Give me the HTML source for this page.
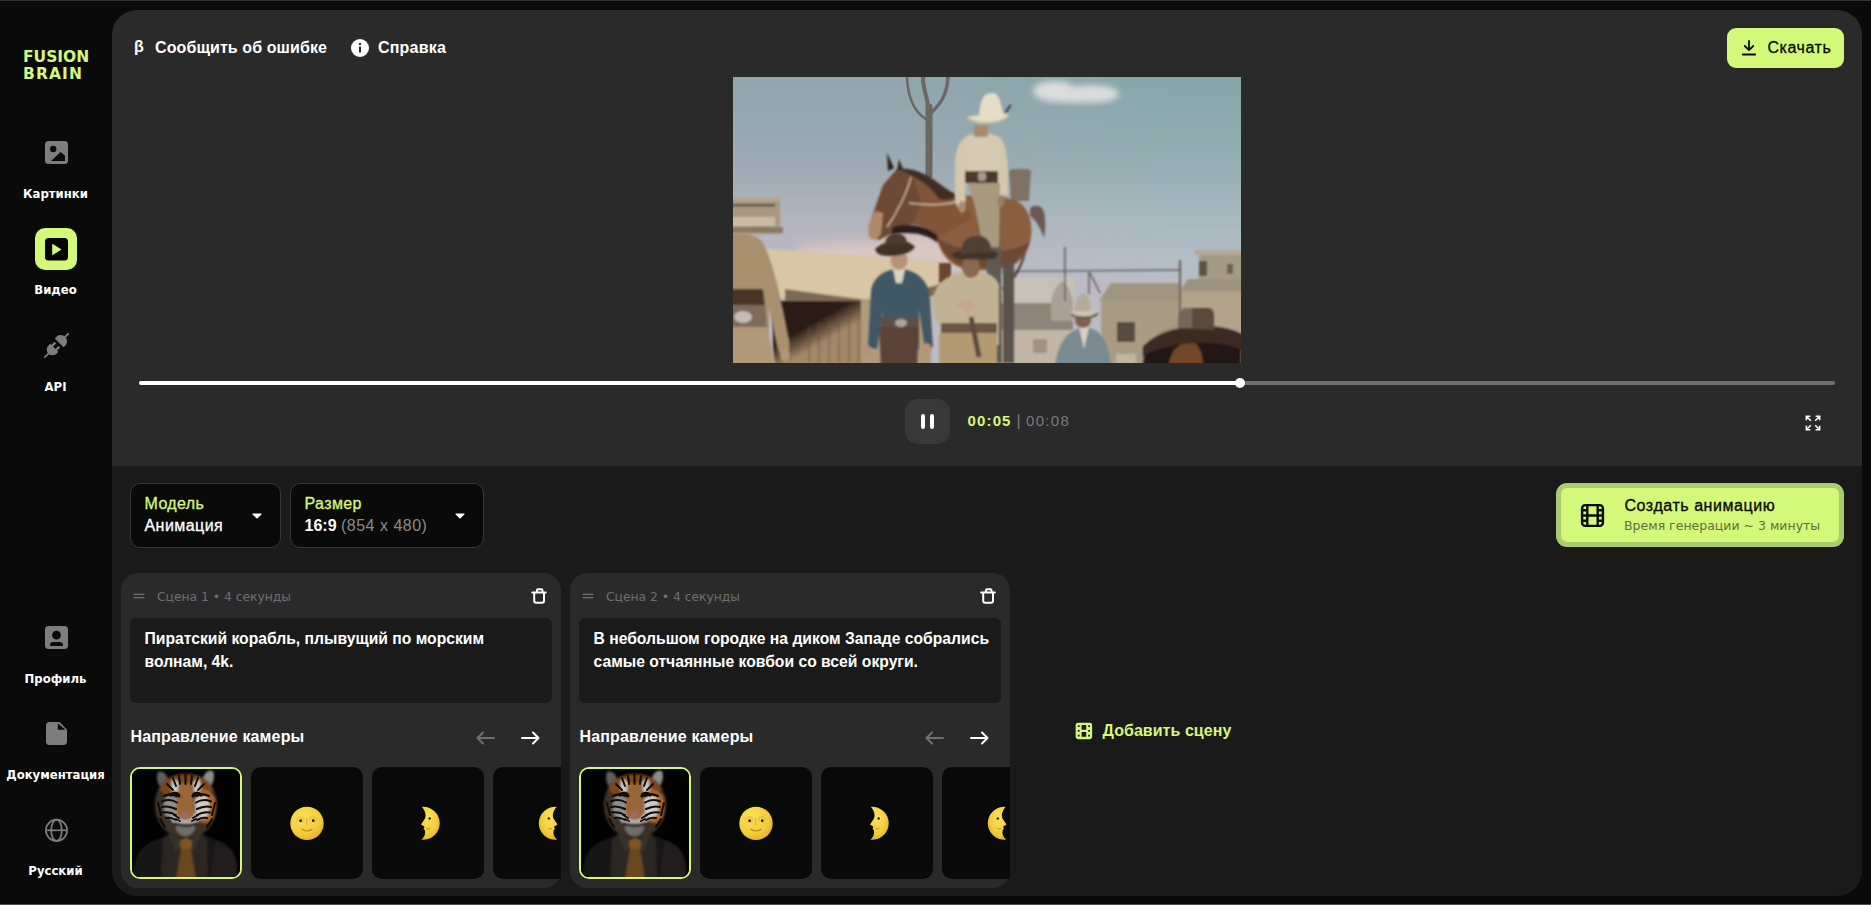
<!DOCTYPE html>
<html lang="ru">
<head>
<meta charset="utf-8">
<title>Fusion Brain</title>
<style>
*{box-sizing:border-box;margin:0;padding:0}
html,body{width:1871px;height:905px;overflow:hidden;background:#0a0a0a}
body{position:relative;font-family:"Liberation Sans",sans-serif;color:#fff}
.abs{position:absolute}
.t{position:absolute;white-space:nowrap;line-height:20px}
.b{font-weight:700}
.dj{font-family:"DejaVu Sans","Liberation Sans",sans-serif}
.lime{color:#d4f87a}
.topstrip{left:0;top:0;width:1871px;height:1px;background:#343434}
.botstrip{left:0;top:904px;width:1871px;height:1px;background:#4c4e4d}
.panel{left:112px;top:10px;width:1750px;height:886px;border-radius:25px;background:#1a1a1a;overflow:hidden}
.panel .upper{left:0;top:0;width:1750px;height:456px;background:#2a2a2a}
.navlbl{position:absolute;left:-.5px;width:112px;text-align:center;font-family:"DejaVu Sans",sans-serif;font-weight:700;font-size:11.700px;line-height:16px;color:#fff}
.navico{position:absolute;left:44px;width:24px;height:24px}
.card{position:absolute;top:573px;width:440px;height:315px;border-radius:17px;background:#2a2a2a}
.ta{position:absolute;left:9px;top:45px;width:422px;height:85px;border-radius:6px;background:#1a1a1a}
.thumbs{position:absolute;left:0;top:190px;width:440px;height:120px;overflow:hidden}
.thumb{position:absolute;top:4px;width:112px;height:112px;border-radius:10px;background:#090909;overflow:hidden}
.thumb.sel{border:2px solid #d4f87a}
.sel-box{position:absolute;top:483px;height:65px;border-radius:10px;background:#0a0a0a;border:1px solid #383838}
</style>
</head>
<body>
<div class="abs topstrip"></div>
<div class="abs botstrip"></div>

<svg width="0" height="0" style="position:absolute"><defs><filter id="tb"><feGaussianBlur stdDeviation=".8"/></filter><filter id="tb2"><feGaussianBlur stdDeviation=".45"/></filter><radialGradient id="mg" cx=".38" cy=".32" r=".8"><stop offset="0" stop-color="#fbe15a"/><stop offset=".6" stop-color="#f3cd3c"/><stop offset="1" stop-color="#dca724"/></radialGradient><filter id="mb"><feGaussianBlur stdDeviation=".35"/></filter></defs></svg>
<!-- SIDEBAR -->
<div id="sidebar">
  <div class="t lime" id="logo1" style="left:23px;top:48px;font-family:'DejaVu Sans',sans-serif;font-weight:700;font-size:15.500px;line-height:18px">FUSION</div>
  <div class="t lime" id="logo2" style="left:23px;top:64.500px;letter-spacing:1.1px;font-family:'DejaVu Sans',sans-serif;font-weight:700;font-size:15.500px;line-height:18px">BRAIN</div>

  <svg class="abs" style="left:45px;top:141px;width:23px;height:23px" viewBox="0 0 23 23"><path fill="#7d7d7d" fill-rule="evenodd" d="M3.500 0h16A3.500 3.500 0 0 1 23 3.500v16a3.500 3.500 0 0 1-3.500 3.500h-16A3.500 3.500 0 0 1 0 19.500v-16A3.500 3.500 0 0 1 3.500 0zM8.200 4.800a3.200 3.200 0 1 0 0 6.400 3.200 3.200 0 0 0 0-6.400zM6 20h14v-5.200l-4.400-3.900z"/></svg>
  <div class="navlbl" id="nl1" style="top:185.500px">Картинки</div>

  <div class="abs" style="left:35px;top:228px;width:42px;height:42px;border-radius:10px;background:#d4f87a"></div>
  <svg class="abs" style="left:45px;top:238px;width:23px;height:23px" viewBox="0 0 23 23"><path fill="#050505" fill-rule="evenodd" d="M3.500 0h16A3.500 3.500 0 0 1 23 3.500v15.500a3.500 3.500 0 0 1-3.500 3.500h-16A3.500 3.500 0 0 1 0 19v-15.500A3.500 3.500 0 0 1 3.500 0zM7.200 6.300v10.400a.4.400 0 0 0 .6.350l8.300-5.200a.4.400 0 0 0 0-.7L7.800 5.950a.4.400 0 0 0-.6.350z"/></svg>
  <div class="navlbl" id="nl2" style="top:282px">Видео</div>

  <svg class="abs" style="left:44px;top:333px;width:25px;height:25px;overflow:visible" viewBox="-12.500 -12.500 25 25"><g fill="#7d7d7d" transform="rotate(45)"><rect x="-.9" y="-17.300" width="1.800" height="6"/><path d="M-6.200 -3.700v-3a6.200 5.500 0 0 1 12.400 0v3z"/><rect x="-4" y="-1.200" width="2.300" height="5"/><rect x="1.700" y="-1.200" width="2.300" height="5"/><path d="M-5.800 3.200h11.600v2.500a5.800 5.800 0 0 1-11.600 0z"/><rect x="-.9" y="11" width="1.800" height="6.300"/></g></svg>
  <div class="navlbl" id="nl3" style="top:378.500px">API</div>

  <svg class="abs" style="left:45px;top:626px;width:23px;height:23px" viewBox="0 0 23 23"><path fill="#7d7d7d" fill-rule="evenodd" d="M3.500 0h16A3.500 3.500 0 0 1 23 3.500v16a3.500 3.500 0 0 1-3.500 3.500h-16A3.500 3.500 0 0 1 0 19.500v-16A3.500 3.500 0 0 1 3.500 0zM11.500 4.800a4.400 4.400 0 1 0 0 8.800 4.400 4.400 0 0 0 0-8.800zM5 20h13v-.8a3.300 3.300 0 0 0-3.300-3.300H8.300A3.300 3.300 0 0 0 5 19.200z"/></svg>
  <div class="navlbl" id="nl4" style="top:671px">Профиль</div>

  <svg class="abs" style="left:46px;top:722px;width:21px;height:23px" viewBox="0 0 21 23"><path fill="#7d7d7d" fill-rule="evenodd" d="M3.500 0h9.200a2 2 0 0 1 1.400.6l6.300 6.300a2 2 0 0 1 .6 1.400V19.500a3.500 3.500 0 0 1-3.500 3.500h-14A3.500 3.500 0 0 1 0 19.500v-16A3.500 3.500 0 0 1 3.500 0zM11.800 1.500v6.300h7.700z"/></svg>
  <div class="navlbl" id="nl5" style="top:767px">Документация</div>

  <svg class="abs" style="left:44px;top:818px;width:25px;height:25px" viewBox="0 0 25 25" fill="none" stroke="#7d7d7d" stroke-width="1.700"><circle cx="12.500" cy="12.300" r="10.600"/><ellipse cx="12.500" cy="12.300" rx="5.300" ry="10.600"/><path d="M2 12.300h21"/></svg>
  <div class="navlbl" id="nl6" style="top:863px">Русский</div>
</div>

<!-- MAIN PANEL -->
<div class="abs panel"><div class="abs upper"></div></div>

<!-- TOP BAR -->
<div class="t b" style="left:134px;top:37px;font-size:16px">β</div>
<div class="t b" id="report" style="left:155px;top:38px;font-size:16px;letter-spacing:.1px">Сообщить об ошибке</div>
<svg class="abs" style="left:350.500px;top:38.500px;width:18px;height:18px" viewBox="0 0 18 18"><circle cx="9" cy="9" r="9" fill="#fff"/><rect x="8" y="7.500" width="2" height="6" rx=".5" fill="#2a2a2a"/><circle cx="9" cy="5" r="1.200" fill="#2a2a2a"/></svg>
<div class="t b" id="help" style="left:378px;top:38px;font-size:16px;letter-spacing:.2px">Справка</div>

<div class="abs" style="left:1727px;top:28px;width:117px;height:40px;border-radius:9px;background:#d4f87a"></div>
<svg class="abs" style="left:1741px;top:40px;width:16px;height:16px" viewBox="0 0 16 16" fill="none" stroke="#0a0a0a" stroke-width="1.800" stroke-linecap="round" stroke-linejoin="round"><path d="M8 1v9M3.800 6l4.200 4.200L12.200 6M1.800 14.500h12.400"/></svg>
<div class="t" id="dl" style="left:1767.500px;top:38.300px;font-size:16px;letter-spacing:.55px;color:#0a0a0a;-webkit-text-stroke:.3px #0a0a0a">Скачать</div>

<!-- VIDEO placeholder -->
<svg class="abs" id="video" style="left:733px;top:77px;width:508px;height:286px" viewBox="0 0 508 286" preserveAspectRatio="none">
<defs>
<linearGradient id="sky" x1="0" y1="0" x2="0" y2="1"><stop offset="0" stop-color="#90a5ad"/><stop offset=".3" stop-color="#9daab3"/><stop offset=".47" stop-color="#adb3be"/><stop offset=".56" stop-color="#b8b6c0"/><stop offset=".7" stop-color="#bdbbc5"/></linearGradient>
<linearGradient id="skyr" x1="0" y1="0" x2="0" y2="1"><stop offset="0" stop-color="#84a7aa"/><stop offset=".35" stop-color="#90adb1"/><stop offset=".65" stop-color="#a3b6bd"/><stop offset=".9" stop-color="#b2bec7"/></linearGradient>
<linearGradient id="skyh" x1="0" y1="0" x2="1" y2="0"><stop offset=".35" stop-color="#fff" stop-opacity="0"/><stop offset=".85" stop-color="#fff" stop-opacity=".9"/></linearGradient><mask id="mr"><rect width="508" height="200" fill="url(#skyh)"/></mask>
<linearGradient id="wallg" x1="0" y1="0" x2="1" y2="1"><stop offset=".35" stop-color="#2c1e16"/><stop offset=".55" stop-color="#a38767"/></linearGradient>
<filter id="b1"><feGaussianBlur stdDeviation="1"/></filter>
<filter id="b3"><feGaussianBlur stdDeviation="3"/></filter>
<filter id="b6"><feGaussianBlur stdDeviation="6"/></filter>
<clipPath id="vc"><rect width="508" height="286"/></clipPath>
</defs>
<g clip-path="url(#vc)">
<rect width="508" height="286" fill="url(#sky)"/>
<rect width="508" height="200" fill="url(#skyr)" mask="url(#mr)"/>
<!-- clouds / dust -->
<g filter="url(#b3)" fill="#dcdcde"><ellipse cx="322" cy="14" rx="22" ry="10"/><ellipse cx="358" cy="17" rx="28" ry="9"/><ellipse cx="340" cy="20" rx="35" ry="6"/></g>
<g filter="url(#b6)" fill="#d9c8c2"><ellipse cx="120" cy="178" rx="60" ry="12"/><ellipse cx="180" cy="172" rx="42" ry="15"/><ellipse cx="215" cy="176" rx="28" ry="18"/></g>
<!-- tree -->
<g fill="none" stroke="#6b6763" stroke-linecap="round"><path d="M196 98V30" stroke-width="7"/><path d="M196 40C196 22 189 10 190 0" stroke-width="4"/><path d="M198 36c8-8 16-16 17-36" stroke-width="3.500"/><path d="M193 42c-10-6-18-18-19-42" stroke-width="2.500"/></g>
<!-- far right buildings -->
<g filter="url(#b1)">
<rect x="466" y="176" width="50" height="30" fill="#a59a86"/><rect x="462" y="173" width="55" height="5" fill="#b3a995"/><rect x="466" y="184" width="8" height="15" fill="#5b5147"/><rect x="494" y="187" width="6" height="10" fill="#6b6055"/>
<path d="M447 214l8-12h60v12z" fill="#9d917f"/><rect x="447" y="214" width="65" height="75" fill="#b1a48b"/>
<path d="M366 224l12-18h68v17z" fill="#a09482"/><rect x="368" y="223" width="79" height="66" fill="#a89b84"/><rect x="384" y="245" width="18" height="20" fill="#574b40"/><rect x="383" y="277" width="20" height="12" fill="#c2b6a0"/>
<path d="M447 183v58" stroke="#5d544c" stroke-width="1.800"/>
<!-- mid buildings -->
<rect x="262" y="200" width="80" height="40" fill="#c6c0b6"/><path d="M262 226h64l14 12v16h-78z" fill="#8d8378"/><rect x="262" y="253" width="78" height="35" fill="#c2b6a4"/><rect x="300" y="262" width="14" height="14" fill="#9d9284"/><path d="M318 228c0-10 5-20 11-24 6 4 11 14 11 24v16h-22z" fill="#aaa196"/>
<path d="M268 194.500L447 193" stroke="#5f5a5a" stroke-width="1.300" fill="none"/><path d="M332 170v54M356 195v22M357 196l10 20" stroke="#5f5a5a" stroke-width="1.500" fill="none"/>
</g>
<!-- left building + awning -->
<g filter="url(#b1)">
<rect x="-2" y="120" width="49" height="37" fill="#a8997f"/><rect x="-2" y="120" width="49" height="4" fill="#b5a790"/><rect x="-2" y="127" width="44" height="2.500" fill="#5e4e3e"/><rect x="-2" y="140" width="44" height="9" fill="#c9bca6"/><rect x="-2" y="150" width="52" height="6" fill="#8b7a64"/>
<path d="M30 172l116 8 66 6v22l-70 14-104-2z" fill="#d9c6a5"/><path d="M52 212l44 6 46 6 70-18v10l-68 16-92-8z" fill="#7d6a55"/>
<rect x="40" y="224" width="112" height="64" fill="url(#wallg)"/><rect x="128" y="222" width="70" height="66" fill="#b09a7c"/>
<g stroke="#6b5440" stroke-width="1" opacity=".8"><path d="M76 250v36M86 246v40M96 244v42M106 240v46M116 238v48M126 234v52"/></g>
</g>
<!-- horse -->
<g filter="url(#b1)">
<path d="M297 131c4-3 9-3 12 0 4 6 4 18 2 30-3-8-6-16-14-22z" fill="#6a5a52"/>
<path d="M293 172c-4 16-12 32-24 40" stroke="#3c2e29" stroke-width="2" fill="none"/>
<path d="M276 94c0-3 22-3 22 0l-2 30h-18z" fill="#7d7265"/>
<path d="M204 160C200 140 210 122 226 118C250 120 270 118 284 124C296 130 300 146 298 160C296 178 284 190 268 192C250 194 236 194 226 190C212 184 206 172 204 160Z" fill="#8a5e40"/>
<path d="M166 92C190 96 210 112 224 118L240 140L204 162C196 150 182 146 172 148L178 100Z" fill="#815439"/>
<path d="M164 92L150 108L136 148L138 160L146 163L158 157L180 146L188 126L180 98Z" fill="#6e4a34"/>
<path d="M164 92c10-2 24 2 36 10 8 6 16 12 24 16-4 4-10 6-18 4-8-12-24-24-42-30z" fill="#3f2d26"/>
<path d="M160 150C174 146 192 148 204 158L205 166C192 156 176 154 158 158Z" fill="#2a1e1a"/>
<path d="M136 148c2-6 4-10 6-14l8 2-2 20c-2 6-8 8-11 5-2-2-2-8-1-13z" fill="#b08a68"/>
<path d="M154 76l7 15-6 3z" fill="#2a201c"/><path d="M166 82l4 10-6 2z" fill="#33261f"/>
<path d="M178 100c-4 16-14 36-24 50M176 126c14 2 34 3 50-2" stroke="#cdb99b" stroke-width="1.400" fill="none"/>
<path d="M204 160c4 14 12 24 24 28 14 4 38 4 52-2 8-4 14-12 17-22-10 8-24 10-40 10-22 0-40-4-53-14z" fill="#6e4830"/>
<rect x="270" y="186" width="11" height="100" fill="#5a534c"/><rect x="206" y="186" width="12" height="20" fill="#6a4530"/>
</g>
<!-- rider -->
<g filter="url(#b1)">
<path d="M222 88c0-14 4-26 14-30 10-3 22-3 30 2 8 6 8 20 9 34v24h-9l-2-24h-30l-2 22c2 6 0 14-4 16-4 0-6-6-6-12z" fill="#d3c7ae"/>
<path d="M234 60h32v36h-32z" fill="#d6cab2"/>
<rect x="241" y="48" width="14" height="12" fill="#a88a70"/>
<path d="M234 40c6 7 34 9 42-2l-6-2c-2-10-4-20-10-20-8 0-12 2-14 22z" fill="#e6dcc5"/><path d="M234 40c8 8 34 8 42-2" stroke="#c9bd9f" stroke-width="2" fill="none"/><path d="M272 36l6-8" stroke="#3a3029" stroke-width="2"/>
<rect x="232" y="94" width="33" height="12" fill="#4d382d"/><rect x="245" y="95" width="8" height="9" rx="3" fill="#a39a8a"/>
<path d="M235 106h32l-1 64h-16l-8-40z" fill="#a79a7e"/>
<path d="M253 170h15l1 116h-13z" fill="#5d5a53"/>
<ellipse cx="229" cy="130" rx="4" ry="6" fill="#a88a70"/><ellipse cx="268" cy="124" rx="3.500" ry="6" fill="#9c7e64"/>
</g>
<!-- man from back, left -->
<g filter="url(#b1)">
<path d="M-4 158c12-4 26-2 34 8 10 18 18 56 26 96 2 12-2 18-6 18-4-2-6-10-8-20l-6-30v62h-40z" fill="#a8906e"/>
<path d="M-4 212h34l2 16h-36z" fill="#4a3428"/><path d="M-4 228h36l2 22h-38z" fill="#7d6a58"/><ellipse cx="10" cy="240" rx="9" ry="6" fill="#c2bdb6"/>
<path d="M-4 250h38l10 42h-48z" fill="#b09a7a"/>
<ellipse cx="52" cy="278" rx="5" ry="7" fill="#b39578"/>
</g>
<!-- man in blue -->
<g filter="url(#b1)">
<path d="M138 214c2-14 14-22 28-22s26 8 30 22l4 56-8 2-6-40v40h-36v-38l-6 38-9-2z" fill="#415965"/>
<path d="M160 192h12l-3 14h-6z" fill="#d9d3c4"/><ellipse cx="166" cy="183" rx="8.500" ry="10" fill="#b79178"/>
<path d="M142 172c10-10 32-12 40-2-4 6-14 9-24 9s-14-1-16-7z" fill="#3f3128"/><path d="M152 168c0-8 5-12 11-12s11 4 11 10z" fill="#4c3c31"/>
<path d="M148 240h38v10h-38z" fill="#5b5046"/><ellipse cx="168" cy="246" rx="6" ry="4" fill="#a9a59c"/>
<path d="M146 250h40l-2 40h-36z" fill="#5a4238"/>
<ellipse cx="134" cy="274" rx="4" ry="6" fill="#b79178"/><ellipse cx="194" cy="272" rx="4" ry="6" fill="#b79178"/>
</g>
<!-- man in cream -->
<g filter="url(#b1)">
<path d="M200 222c2-14 12-26 40-28 14 0 24 6 26 14v60h-52l-6-18c-6-6-10-16-8-28z" fill="#c2b294"/>
<ellipse cx="238" cy="190" rx="9" ry="11" fill="#8a6850"/>
<path d="M219 177c8-5 34-7 46-1l-2 5c-12 2-30 2-42 0z" fill="#3f3128"/><path d="M228 177c0-12 6-18 16-18s14 6 14 16z" fill="#4f4035"/>
<path d="M222 226l14-4 8 8-10 8z" fill="#c4a88c"/>
<path d="M208 246h56v10h-56z" fill="#6b5844"/>
<path d="M206 256h58v34h-58z" fill="#b39a72"/><path d="M238 240l8 40" stroke="#5a4a3c" stroke-width="5"/>
</g>
<!-- small man right -->
<g filter="url(#b1)">
<path d="M322 290c2-22 12-38 30-40 16 2 24 14 26 40z" fill="#7a8a92"/><path d="M346 250l5 22 5-22z" fill="#d8d2c4"/>
<ellipse cx="350" cy="243" rx="8" ry="8" fill="#7d6350"/>
<path d="M337 236c6-6 22-8 28 0-4 5-24 5-28 0z" fill="#cbc5b5"/><path d="M342 234c0-8 3-17 8.500-17s7.500 9 7.500 17z" fill="#b3ab9a"/><path d="M338 237c6 5 22 5 27-1" stroke="#5a4f45" stroke-width="2" fill="none"/>
</g>
<!-- big hat bottom right -->
<g filter="url(#b1)">
<path d="M410 290c0-20 14-32 36-34h62v34z" fill="#241813"/>
<path d="M436 290c0-14 8-24 22-26 8 2 12 12 12 26z" fill="#744628"/>
<path d="M410 270c10-14 30-22 56-22 22 0 36 4 46 10v16c-14-6-30-9-48-8-20 1-40 4-54 14z" fill="#3a2a22"/><path d="M412 266c14-12 36-18 58-18s32 4 40 8" stroke="#b5ab9a" stroke-width="1.300" fill="none"/>
<path d="M445 251c0-12 2-20 8-20h22c5 0 6 4 6 10v12z" fill="#5a4a3e"/><path d="M445 251c0-12 2-20 8-20h6v20z" fill="#76665a"/>
</g>
</g>
</svg>

<!-- PROGRESS -->
<div class="abs" style="left:139px;top:381px;width:1696px;height:4px;border-radius:2px;background:#6f6f6f"></div>
<div class="abs" style="left:139px;top:381px;width:1101px;height:4px;border-radius:2px;background:#fff"></div>
<div class="abs" style="left:1235px;top:378px;width:10px;height:10px;border-radius:5px;background:#fff"></div>

<div class="abs" style="left:905px;top:399px;width:45px;height:45px;border-radius:13px;background:#383838"></div>
<div class="abs" style="left:921px;top:414px;width:4px;height:15px;border-radius:2px;background:#fff"></div>
<div class="abs" style="left:930px;top:414px;width:4px;height:15px;border-radius:2px;background:#fff"></div>
<div class="t b lime" id="t1" style="left:967.500px;top:410.700px;font-size:15px;letter-spacing:1.150px">00:05</div>
<div class="t" style="left:1016.500px;top:411px;font-size:16px;color:#7a7a7a">|</div>
<div class="t" id="t2" style="left:1026px;top:410.700px;font-size:15px;letter-spacing:1.300px;color:#7a7a7a">00:08</div>

<svg class="abs" style="left:1805px;top:415px;width:16px;height:16px" viewBox="0 0 18 18" fill="none" stroke="#fff" stroke-width="1.700"><path d="M1.500 6V1.500H6M1.500 1.500l5 5M12 1.500h4.500V6M16.500 1.500l-5 5M1.500 12v4.500H6M1.500 16.500l5-5M12 16.500h4.500V12M16.500 16.500l-5-5"/></svg>

<!-- SELECTS -->
<div class="sel-box" style="left:130px;width:151px"></div>
<div class="t lime" id="m1" style="left:144.500px;top:494px;font-size:16px;letter-spacing:.4px;-webkit-text-stroke:.3px #d4f87a">Модель</div>
<div class="t" id="m2" style="left:144.500px;top:516px;font-size:16px;letter-spacing:.45px;-webkit-text-stroke:.3px #fff">Анимация</div>
<svg class="abs" style="left:252px;top:512.500px;width:10px;height:6px" viewBox="0 0 12 7"><path d="M1.200 .5h9.600a.7.7 0 0 1 .5 1.200L6.600 6.300a.85.85 0 0 1-1.200 0L.7 1.700A.7.7 0 0 1 1.200.5z" fill="#fff"/></svg>

<div class="sel-box" style="left:290px;width:194px"></div>
<div class="t lime" id="r1" style="left:304.500px;top:494px;font-size:16px;letter-spacing:.4px;-webkit-text-stroke:.3px #d4f87a">Размер</div>
<div class="t" id="r2" style="left:304.500px;top:516px;font-size:16px"><span class="b">16:9</span> <span style="color:#8a8a8a;letter-spacing:.5px">(854 x 480)</span></div>
<svg class="abs" style="left:455px;top:512.500px;width:10px;height:6px" viewBox="0 0 12 7"><path d="M1.200 .5h9.600a.7.7 0 0 1 .5 1.200L6.600 6.300a.85.85 0 0 1-1.200 0L.7 1.700A.7.7 0 0 1 1.200.5z" fill="#fff"/></svg>

<!-- CREATE BUTTON -->
<div class="abs" style="left:1556px;top:483px;width:288px;height:64px;border-radius:11px;background:#d4f87a;border:5px solid #a9cc70"></div>
<svg class="abs" id="film" style="left:1579.700px;top:503px;width:25px;height:25px" viewBox="0 0 24 24" fill="none" stroke="#0a0a0a" stroke-width="2.300"><rect x="2" y="2" width="20" height="20" rx="3"/><path d="M7 2v20M17 2v20M2 12h20M2 7h5M2 17h5M17 7h5M17 17h5"/></svg>
<div class="t" id="c1" style="left:1624.500px;top:495.500px;font-size:16px;letter-spacing:.55px;color:#0a0a0a;-webkit-text-stroke:.35px #0a0a0a">Создать анимацию</div>
<div class="t dj" id="c2" style="left:1624px;top:515.800px;font-size:12.500px;color:#5f6e3c">Время генерации ~ 3 минуты</div>

<!-- SCENE CARDS placeholder; filled below -->

<div class="card" style="left:121px">
  <svg class="abs" style="left:12px;top:18px;width:13px;height:10px" viewBox="0 0 13 10"><path d="M1 3.400h10M1 6.700h10" stroke="#707070" stroke-width="1.200" stroke-linecap="round"/></svg>
  
  <div class="t dj" style="left:36px;top:13.600px;font-size:12.300px;color:#6f6f6f">Сцена 1 • 4 секунды</div>
  <svg class="abs" style="left:409px;top:13px;width:18px;height:20px" viewBox="0 0 18 20" fill="none" stroke="#fff" stroke-width="2" stroke-linecap="round" stroke-linejoin="round"><path d="M2.200 6.600h13.600M6.900 6.600V4.400a1.200 1.200 0 0 1 1.200-1.200h3.200a1.200 1.200 0 0 1 1.200 1.200V6.600M4.200 6.600v8.200a2 2 0 0 0 2 2h5.800a2 2 0 0 0 2-2V6.600"/></svg>
  <div class="ta"></div>
  <div class="t b" style="left:23.500px;top:54px;font-size:15.700px;line-height:23px">Пиратский корабль, плывущий по морским<br>волнам, 4k.</div>
  <div class="t b" style="left:9.500px;top:154px;font-size:16px;letter-spacing:.15px">Направление камеры</div>
  <svg class="abs" style="left:355px;top:158px;width:19px;height:14px" viewBox="0 0 19 14" fill="none" stroke="#6f6f6f" stroke-width="2" stroke-linecap="round" stroke-linejoin="round"><path d="M18 7H1.500M7 1.500L1.500 7 7 12.500"/></svg>
  <svg class="abs" style="left:400px;top:158px;width:19px;height:14px" viewBox="0 0 19 14" fill="none" stroke="#fff" stroke-width="2" stroke-linecap="round" stroke-linejoin="round"><path d="M1 7h16.500M12 1.500L17.500 7 12 12.500"/></svg>
  <div class="thumbs"><div class="thumb sel" style="left:9px"><svg style="position:absolute;left:0;top:0;width:108px;height:108px" viewBox="2 2 108 108"><rect x="0" y="0" width="112" height="112" fill="#020202"/><g filter="url(#tb)"><path d="M4 112c0-24 6-34 24-40l20-9h16l22 10c18 6 22 16 22 39z" fill="#191512"/><path d="M86 73c14 5 20 14 22 39H80z" fill="#241f1a"/><path d="M31 112l2-40 14-10h18l12 10 1 40z" fill="#292623"/><path d="M38 66l16 8-8 12zM72 66l-16 8 8 12z" fill="#34302c"/><path d="M50 74l6-3 6 3-1 8 5 30H46l5-30z" fill="#6a471b"/><path d="M50 74l6-3 6 3-1 8h-10z" fill="#805723"/><path d="M28 5c5-2 9 2 11 10l-8 6c-4-5-5-11-3-16z" fill="#5e5d60"/><path d="M83 4c-5-2-9 2-11 10l8 6c4-5 5-11 3-16z" fill="#8b8b90"/><path d="M56 7c17 0 28 9 31 26 1 13-3 24-11 31-6 4-12 6-20 6s-14-2-20-6c-8-7-12-18-11-31 3-17 14-26 31-26z" fill="#3b3027"/><path d="M56 7c12 0 22 5 27 15l-6 6H35l-6-6c5-10 15-15 27-15z" fill="#7c4517"/><path d="M66 22c8-2 16 2 19 10 1 8 0 16-4 22-5 3-10 2-14-2z" fill="#a9622a"/><path d="M42 13c3-1 6 0 7 3l-1 9c-3 1-6 0-7-3zM70 13c-3-1-6 0-7 3l1 9c3 1 6 0 7-3z" fill="#c9c5bd"/><path d="M36 30c4-2 9-1 12 2l-1 18c-4 3-9 2-12-2-2-6-2-12 1-18z" fill="#8f8f8b"/><path d="M77 30c-4-2-9-1-12 2l1 18c4 3 9 2 12-2 2-6 2-12-1-18z" fill="#cfcbc3"/><path d="M42 47c6-3 22-3 27 0 2 5-1 9-5 10H46c-4-1-6-5-4-10z" fill="#b5b3ad"/><path d="M46 57h19c1 6-3 12-9.500 12S45 63 46 57z" fill="#6f6e6b"/><path d="M49 16h13l3 26c0 7-4 11-9.500 11S46 49 46 42z" fill="#9a6636"/><path d="M51 46c2-2 7-2 9 0l-2 6h-5z" fill="#a06a62"/><path d="M44 56c6 3 18 3 23 0" stroke="#15110f" stroke-width="3" fill="none"/></g><g fill="none" stroke="#0b0908" stroke-width="2" stroke-linecap="round" filter="url(#tb2)"><path d="M34 29c4-2 9-2 13 0M32 34.500c5-2 10-2 15 1M32 40c5-1.500 9-.5 14 2M33 45.500c5-1 9 0 13 2.500M36 51c4-1 7 0 10 2M79 29c-4-2-9-2-13 0M81 34.500c-5-2-10-2-15 1M81 40c-5-1.500-9-.5-14 2M80 45.500c-5-1-9 0-13 2.500M77 51c-4-1-7 0-10 2M49 9l1 8M55.500 7v10M62 9l-1 8M43 11l3 8M68 11l-3 8M37 17l6 6M74 17l-6 6M28 36l3 12M85 36l-3 12M30 52l5 8M82 52l-5 8"/><path d="M41 28c3-3 7-2 8 1M71 28c-3-3-7-2-8 1" stroke-width="3"/><path d="M44 48l5 3M68 48l-5 3M46 52l4 2M66 52l-4 2" stroke-width="1.800"/></g></svg></div>
  <div class="thumb" style="left:130px"><svg style="position:absolute;left:0;top:0;width:112px;height:112px" viewBox="0 0 112 112"><g filter="url(#mb)"><circle cx="56" cy="56.400" r="16.700" fill="url(#mg)"/><ellipse cx="49.500" cy="52.500" rx="4.200" ry="3.600" fill="#e5b935" opacity=".55"/><ellipse cx="62" cy="52.500" rx="4.200" ry="3.600" fill="#e5b935" opacity=".55"/><path d="M55.600 51v7.500" stroke="#d9a92c" stroke-width="1.300" opacity=".7"/><path d="M50.500 62c3 2.600 8 2.600 11 0" stroke="#b98618" stroke-width="1.100" fill="none"/><circle cx="49.200" cy="53.600" r="2.100" fill="#f7e7a0"/><circle cx="61.800" cy="53.600" r="2.100" fill="#f7e7a0"/><circle cx="49.600" cy="53.800" r="1.450" fill="#3a2413"/><circle cx="62.200" cy="53.800" r="1.450" fill="#3a2413"/></g></svg></div>
  <div class="thumb" style="left:251px"><svg style="position:absolute;left:0;top:0;width:112px;height:112px" viewBox="0 0 112 112"><g filter="url(#mb)" transform=""><path d="M49.400 39.900A16.500 16.500 0 1 1 49.400 72.700C52.500 70 53.800 66.500 52.800 63.200L51.600 61.600L52.500 59.800L49 57.600L53 51.500C54.500 47.500 53 43.500 49.900 39.900Z" fill="url(#mg)"/><circle cx="58" cy="51.300" r="1.900" fill="#f7e7a0"/><circle cx="57.700" cy="51.500" r="1.350" fill="#3a2413"/><path d="M54.500 61.500c1.500 .8 2.800 .5 3.800-.5" stroke="#b98618" stroke-width=".9" fill="none"/></g></svg></div>
  <div class="thumb" style="left:372px"><svg style="position:absolute;left:0;top:0;width:112px;height:112px" viewBox="0 0 112 112"><g filter="url(#mb)" transform="translate(113.500 0) scale(-1 1)"><path d="M49.400 39.900A16.500 16.500 0 1 1 49.400 72.700C52.500 70 53.800 66.500 52.800 63.200L51.600 61.600L52.500 59.800L49 57.600L53 51.500C54.500 47.500 53 43.500 49.900 39.900Z" fill="url(#mg)"/><circle cx="58" cy="51.300" r="1.900" fill="#f7e7a0"/><circle cx="57.700" cy="51.500" r="1.350" fill="#3a2413"/><path d="M54.500 61.500c1.500 .8 2.800 .5 3.800-.5" stroke="#b98618" stroke-width=".9" fill="none"/></g></svg></div></div>
</div>
<div class="card" style="left:570px">
  <svg class="abs" style="left:12px;top:18px;width:13px;height:10px" viewBox="0 0 13 10"><path d="M1 3.400h10M1 6.700h10" stroke="#707070" stroke-width="1.200" stroke-linecap="round"/></svg>
  
  <div class="t dj" style="left:36px;top:13.600px;font-size:12.300px;color:#6f6f6f">Сцена 2 • 4 секунды</div>
  <svg class="abs" style="left:409px;top:13px;width:18px;height:20px" viewBox="0 0 18 20" fill="none" stroke="#fff" stroke-width="2" stroke-linecap="round" stroke-linejoin="round"><path d="M2.200 6.600h13.600M6.900 6.600V4.400a1.200 1.200 0 0 1 1.200-1.200h3.200a1.200 1.200 0 0 1 1.200 1.200V6.600M4.200 6.600v8.200a2 2 0 0 0 2 2h5.800a2 2 0 0 0 2-2V6.600"/></svg>
  <div class="ta"></div>
  <div class="t b" style="left:23.500px;top:54px;font-size:15.700px;line-height:23px">В небольшом городке на диком Западе собрались<br>самые отчаянные ковбои со всей округи.</div>
  <div class="t b" style="left:9.500px;top:154px;font-size:16px;letter-spacing:.15px">Направление камеры</div>
  <svg class="abs" style="left:355px;top:158px;width:19px;height:14px" viewBox="0 0 19 14" fill="none" stroke="#6f6f6f" stroke-width="2" stroke-linecap="round" stroke-linejoin="round"><path d="M18 7H1.500M7 1.500L1.500 7 7 12.500"/></svg>
  <svg class="abs" style="left:400px;top:158px;width:19px;height:14px" viewBox="0 0 19 14" fill="none" stroke="#fff" stroke-width="2" stroke-linecap="round" stroke-linejoin="round"><path d="M1 7h16.500M12 1.500L17.500 7 12 12.500"/></svg>
  <div class="thumbs"><div class="thumb sel" style="left:9px"><svg style="position:absolute;left:0;top:0;width:108px;height:108px" viewBox="2 2 108 108"><rect x="0" y="0" width="112" height="112" fill="#020202"/><g filter="url(#tb)"><path d="M4 112c0-24 6-34 24-40l20-9h16l22 10c18 6 22 16 22 39z" fill="#191512"/><path d="M86 73c14 5 20 14 22 39H80z" fill="#241f1a"/><path d="M31 112l2-40 14-10h18l12 10 1 40z" fill="#292623"/><path d="M38 66l16 8-8 12zM72 66l-16 8 8 12z" fill="#34302c"/><path d="M50 74l6-3 6 3-1 8 5 30H46l5-30z" fill="#6a471b"/><path d="M50 74l6-3 6 3-1 8h-10z" fill="#805723"/><path d="M28 5c5-2 9 2 11 10l-8 6c-4-5-5-11-3-16z" fill="#5e5d60"/><path d="M83 4c-5-2-9 2-11 10l8 6c4-5 5-11 3-16z" fill="#8b8b90"/><path d="M56 7c17 0 28 9 31 26 1 13-3 24-11 31-6 4-12 6-20 6s-14-2-20-6c-8-7-12-18-11-31 3-17 14-26 31-26z" fill="#3b3027"/><path d="M56 7c12 0 22 5 27 15l-6 6H35l-6-6c5-10 15-15 27-15z" fill="#7c4517"/><path d="M66 22c8-2 16 2 19 10 1 8 0 16-4 22-5 3-10 2-14-2z" fill="#a9622a"/><path d="M42 13c3-1 6 0 7 3l-1 9c-3 1-6 0-7-3zM70 13c-3-1-6 0-7 3l1 9c3 1 6 0 7-3z" fill="#c9c5bd"/><path d="M36 30c4-2 9-1 12 2l-1 18c-4 3-9 2-12-2-2-6-2-12 1-18z" fill="#8f8f8b"/><path d="M77 30c-4-2-9-1-12 2l1 18c4 3 9 2 12-2 2-6 2-12-1-18z" fill="#cfcbc3"/><path d="M42 47c6-3 22-3 27 0 2 5-1 9-5 10H46c-4-1-6-5-4-10z" fill="#b5b3ad"/><path d="M46 57h19c1 6-3 12-9.500 12S45 63 46 57z" fill="#6f6e6b"/><path d="M49 16h13l3 26c0 7-4 11-9.500 11S46 49 46 42z" fill="#9a6636"/><path d="M51 46c2-2 7-2 9 0l-2 6h-5z" fill="#a06a62"/><path d="M44 56c6 3 18 3 23 0" stroke="#15110f" stroke-width="3" fill="none"/></g><g fill="none" stroke="#0b0908" stroke-width="2" stroke-linecap="round" filter="url(#tb2)"><path d="M34 29c4-2 9-2 13 0M32 34.500c5-2 10-2 15 1M32 40c5-1.500 9-.5 14 2M33 45.500c5-1 9 0 13 2.500M36 51c4-1 7 0 10 2M79 29c-4-2-9-2-13 0M81 34.500c-5-2-10-2-15 1M81 40c-5-1.500-9-.5-14 2M80 45.500c-5-1-9 0-13 2.500M77 51c-4-1-7 0-10 2M49 9l1 8M55.500 7v10M62 9l-1 8M43 11l3 8M68 11l-3 8M37 17l6 6M74 17l-6 6M28 36l3 12M85 36l-3 12M30 52l5 8M82 52l-5 8"/><path d="M41 28c3-3 7-2 8 1M71 28c-3-3-7-2-8 1" stroke-width="3"/><path d="M44 48l5 3M68 48l-5 3M46 52l4 2M66 52l-4 2" stroke-width="1.800"/></g></svg></div>
  <div class="thumb" style="left:130px"><svg style="position:absolute;left:0;top:0;width:112px;height:112px" viewBox="0 0 112 112"><g filter="url(#mb)"><circle cx="56" cy="56.400" r="16.700" fill="url(#mg)"/><ellipse cx="49.500" cy="52.500" rx="4.200" ry="3.600" fill="#e5b935" opacity=".55"/><ellipse cx="62" cy="52.500" rx="4.200" ry="3.600" fill="#e5b935" opacity=".55"/><path d="M55.600 51v7.500" stroke="#d9a92c" stroke-width="1.300" opacity=".7"/><path d="M50.500 62c3 2.600 8 2.600 11 0" stroke="#b98618" stroke-width="1.100" fill="none"/><circle cx="49.200" cy="53.600" r="2.100" fill="#f7e7a0"/><circle cx="61.800" cy="53.600" r="2.100" fill="#f7e7a0"/><circle cx="49.600" cy="53.800" r="1.450" fill="#3a2413"/><circle cx="62.200" cy="53.800" r="1.450" fill="#3a2413"/></g></svg></div>
  <div class="thumb" style="left:251px"><svg style="position:absolute;left:0;top:0;width:112px;height:112px" viewBox="0 0 112 112"><g filter="url(#mb)" transform=""><path d="M49.400 39.900A16.500 16.500 0 1 1 49.400 72.700C52.500 70 53.800 66.500 52.800 63.200L51.600 61.600L52.500 59.800L49 57.600L53 51.500C54.500 47.500 53 43.500 49.900 39.900Z" fill="url(#mg)"/><circle cx="58" cy="51.300" r="1.900" fill="#f7e7a0"/><circle cx="57.700" cy="51.500" r="1.350" fill="#3a2413"/><path d="M54.500 61.500c1.500 .8 2.800 .5 3.800-.5" stroke="#b98618" stroke-width=".9" fill="none"/></g></svg></div>
  <div class="thumb" style="left:372px"><svg style="position:absolute;left:0;top:0;width:112px;height:112px" viewBox="0 0 112 112"><g filter="url(#mb)" transform="translate(113.500 0) scale(-1 1)"><path d="M49.400 39.900A16.500 16.500 0 1 1 49.400 72.700C52.500 70 53.800 66.500 52.800 63.200L51.600 61.600L52.500 59.800L49 57.600L53 51.500C54.500 47.500 53 43.500 49.900 39.900Z" fill="url(#mg)"/><circle cx="58" cy="51.300" r="1.900" fill="#f7e7a0"/><circle cx="57.700" cy="51.500" r="1.350" fill="#3a2413"/><path d="M54.500 61.500c1.500 .8 2.800 .5 3.800-.5" stroke="#b98618" stroke-width=".9" fill="none"/></g></svg></div></div>
</div>

<!-- ADD SCENE -->
<svg class="abs" style="left:1074.200px;top:720.700px;width:19.800px;height:19.800px" viewBox="0 0 24 24"><path fill="#d4f87a" fill-rule="evenodd" d="M5 2h14a3 3 0 0 1 3 3v14a3 3 0 0 1-3 3H5a3 3 0 0 1-3-3V5a3 3 0 0 1 3-3zm4.200 2.800v5.800h5.600V4.800zm0 8.600v5.800h5.600v-5.800zM4.600 5.200v2.200h2.200V5.200zm0 5.700v2.200h2.200v-2.200zm0 5.700v2.200h2.200v-2.200zm12.600-11.400v2.200h2.200V5.200zm0 5.700v2.200h2.200v-2.200zm0 5.700v2.200h2.200v-2.200z"/></svg>
<div class="t b lime" id="add" style="left:1102.500px;top:721px;font-size:16px;letter-spacing:.05px">Добавить сцену</div>
</body>
</html>
